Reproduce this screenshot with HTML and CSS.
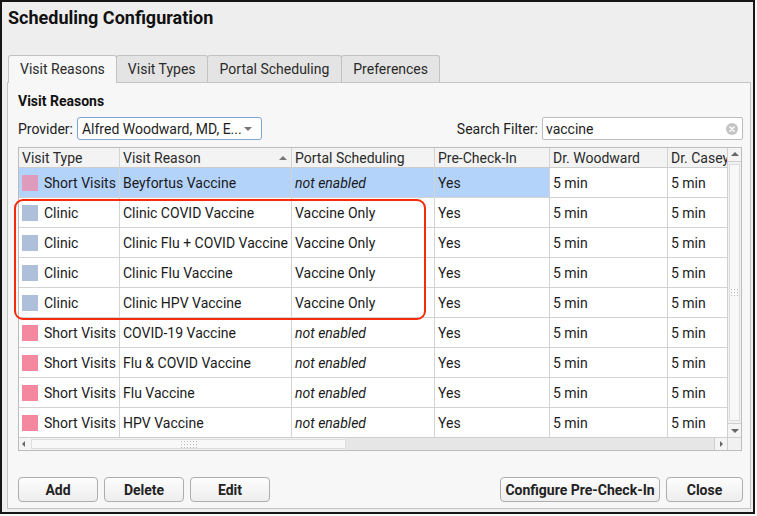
FILE: index.html
```html
<!DOCTYPE html>
<html lang="en">
<head>
    <meta charset="UTF-8">
    <title>Scheduling Configuration</title>
    <link rel="stylesheet" href="styles.css">
</head>
<body>

    <div class="window">
        <h1 class="title">Scheduling Configuration</h1>

        <div class="tabs">
            <div class="tab active">Visit Reasons</div>
            <div class="tab">Visit Types</div>
            <div class="tab wide">Portal Scheduling</div>
            <div class="tab">Preferences</div>
        </div>

        <div class="panel">
            <h2 class="section-title">Visit Reasons</h2>

            <div class="filters">
                <label class="field-label">Provider:</label>
                <div class="select">
                    <span>Alfred Woodward, MD, E...</span>
                    <span class="caret"></span>
                </div>
                <div class="spacer"></div>
                <label class="field-label">Search Filter:</label>
                <div class="search">
                    <span>vaccine</span>
                    <span class="clear">
                        <svg width="12" height="12" viewBox="0 0 12 12">
                            <circle cx="6" cy="6" r="6" fill="#c4c4c4"/>
                            <path d="M4 4 L8 8 M8 4 L4 8" stroke="#fff" stroke-width="1.6" stroke-linecap="round"/>
                        </svg>
                    </span>
                </div>
            </div>

            <div class="grid-frame">
                <div class="viewport">
                    <table>
                        <colgroup>
                            <col class="c-type">
                            <col class="c-reason">
                            <col class="c-portal">
                            <col class="c-precheck">
                            <col class="c-woodward">
                            <col class="c-casey">
                        </colgroup>
                        <thead>
                            <tr>
                                <th>Visit Type</th>
                                <th class="sorted">Visit Reason <span class="sort-arrow"></span></th>
                                <th>Portal Scheduling</th>
                                <th>Pre-Check-In</th>
                                <th>Dr. Woodward</th>
                                <th>Dr. Casey</th>
                            </tr>
                        </thead>
                        <tbody id="reasonRows">
                            <!-- rows are filled in by the script below -->
                        </tbody>
                    </table>
                </div>

                <div class="vscroll">
                    <div class="arrow-btn up"></div>
                    <div class="vthumb"><span class="grip"></span></div>
                    <div class="arrow-btn down"></div>
                </div>

                <div class="hscroll">
                    <div class="arrow-btn left"></div>
                    <div class="hthumb"><span class="grip"></span></div>
                    <div class="htrack"></div>
                    <div class="arrow-btn right"></div>
                </div>
                <div class="corner"></div>

                <div class="highlight"></div>
            </div>

            <div class="actions">
                <button class="btn btn-add">Add</button>
                <button class="btn btn-delete">Delete</button>
                <button class="btn btn-edit">Edit</button>
                <div class="spacer"></div>
                <button class="btn btn-config">Configure Pre-Check-In</button>
                <button class="btn btn-close">Close</button>
            </div>
        </div>
    </div>

    <script>
        const reasons = [
            { type: 'Short Visits', swatch: 'swatch-beyfortus', reason: 'Beyfortus Vaccine', portal: null, selected: true },
            { type: 'Clinic', swatch: 'swatch-clinic', reason: 'Clinic COVID Vaccine', portal: 'Vaccine Only' },
            { type: 'Clinic', swatch: 'swatch-clinic', reason: 'Clinic Flu + COVID Vaccine', portal: 'Vaccine Only' },
            { type: 'Clinic', swatch: 'swatch-clinic', reason: 'Clinic Flu Vaccine', portal: 'Vaccine Only' },
            { type: 'Clinic', swatch: 'swatch-clinic', reason: 'Clinic HPV Vaccine', portal: 'Vaccine Only' },
            { type: 'Short Visits', swatch: 'swatch-short', reason: 'COVID-19 Vaccine', portal: null },
            { type: 'Short Visits', swatch: 'swatch-short', reason: 'Flu & COVID Vaccine', portal: null },
            { type: 'Short Visits', swatch: 'swatch-short', reason: 'Flu Vaccine', portal: null },
            { type: 'Short Visits', swatch: 'swatch-short', reason: 'HPV Vaccine', portal: null }
        ];

        const tableBody = document.getElementById('reasonRows');

        reasons.forEach(item => {
            const row = document.createElement('tr');
            if (item.selected) row.classList.add('selected');

            const typeCell = document.createElement('td');
            typeCell.className = 'type-cell';
            const swatch = document.createElement('span');
            swatch.className = 'swatch ' + item.swatch;
            typeCell.appendChild(swatch);
            typeCell.appendChild(document.createTextNode(item.type));
            row.appendChild(typeCell);

            const reasonCell = document.createElement('td');
            reasonCell.textContent = item.reason;
            row.appendChild(reasonCell);

            const portalCell = document.createElement('td');
            if (item.portal) {
                portalCell.textContent = item.portal;
            } else {
                portalCell.textContent = 'not enabled';
                portalCell.classList.add('muted');
            }
            row.appendChild(portalCell);

            ['Yes', '5 min', '5 min'].forEach((text, i) => {
                const cell = document.createElement('td');
                cell.textContent = text;
                if (i > 0) cell.classList.add('plain');
                row.appendChild(cell);
            });

            tableBody.appendChild(row);
        });
    </script>

</body>
</html>
```

FILE: styles.css
```css
body {
    margin: 0;
    background: #fafafa;
    font-family: Roboto, 'Liberation Sans', sans-serif;
    font-size: 14px;
    color: #1e1e1e;
}

.window {
    width: 755px;
    height: 514px;
    box-sizing: border-box;
    border: 2px solid #161616;
    background: #eeeeee;
    padding: 0 2px 0 5px;
    display: flex;
    flex-direction: column;
}

.title {
    margin: 0;
    padding: 4px 0 0 1px;
    font-size: 18px;
    line-height: 24px;
    font-weight: bold;
    color: #111;
}

/* tab strip */
.tabs {
    display: flex;
    margin-top: 25px;
    padding-left: 1px;
    height: 27px;
    position: relative;
    z-index: 1;
}

.tab {
    box-sizing: border-box;
    height: 27px;
    line-height: 26px;
    padding: 0 11px;
    margin-right: -1px;
    border: 1px solid #c2c2c2;
    border-bottom: none;
    border-radius: 3px 3px 0 0;
    background: #e4e4e4;
    color: #2a2a2a;
}

.tab.wide {
    padding: 0 12px;
}

.tab.active {
    background: #f7f7f7;
    height: 28px;
}

.panel {
    flex: 1;
    margin-bottom: 3px;
    border: 1px solid #c4c4c4;
    background: #f7f7f7;
    padding: 9px 8px 0 10px;
    display: flex;
    flex-direction: column;
}

.section-title {
    margin: 0;
    font-size: 14px;
    line-height: 18px;
    font-weight: bold;
    color: #111;
}

/* provider + search row */
.filters {
    display: flex;
    align-items: center;
    height: 23px;
    margin-top: 7px;
}

.field-label {
    margin-right: 4px;
    color: #222;
}

.spacer {
    flex: 1;
}

.select {
    box-sizing: border-box;
    width: 185px;
    height: 23px;
    border: 1px solid #7ea6d6;
    border-radius: 3px;
    background: #fff;
    display: flex;
    align-items: center;
    padding: 0 0 0 4px;
}

.select .caret {
    margin-left: auto;
    margin-right: 9px;
    width: 0;
    height: 0;
    border-left: 4px solid transparent;
    border-right: 4px solid transparent;
    border-top: 4px solid #777;
}

.search {
    box-sizing: border-box;
    width: 201px;
    height: 23px;
    margin-right: -1px;
    border: 1px solid #bdbdbd;
    border-radius: 2px;
    background: #fff;
    display: flex;
    align-items: center;
    padding: 0 4px 0 3px;
}

.search .clear {
    margin-left: auto;
    display: flex;
}

/* table with its scroll bars */
.grid-frame {
    position: relative;
    margin-top: 7px;
    box-sizing: border-box;
    width: 724px;
    height: 304px;
    border: 1px solid #bdbdbd;
    background: #fff;
    display: grid;
    grid-template-columns: 708px 14px;
    grid-template-rows: 289px 13px;
}

.viewport {
    overflow: hidden;
}

table {
    table-layout: fixed;
    border-collapse: separate;
    border-spacing: 0;
    width: 766px;
}

.c-type { width: 101px; }
.c-reason { width: 172px; }
.c-portal { width: 143px; }
.c-precheck { width: 115px; }
.c-woodward { width: 118px; }
.c-casey { width: 117px; }

th, td {
    text-align: left;
    white-space: nowrap;
    overflow: hidden;
    border-right: 1px solid #d3d3d3;
    border-bottom: 1px solid #d3d3d3;
    padding: 0 0 0 3px;
    line-height: 16px;
}

th {
    height: 19px;
    font-weight: normal;
    color: #2a2a2a;
    background: #f3f3f3;
    border-bottom-color: #cccccc;
}

th.sorted {
    position: relative;
}

.sort-arrow {
    position: absolute;
    right: 4px;
    top: 8px;
    width: 0;
    height: 0;
    border-left: 4px solid transparent;
    border-right: 4px solid transparent;
    border-bottom: 4px solid #777;
}

td {
    height: 29px;
    color: #1a1a1a;
}

td.muted {
    font-style: italic;
}

tr.selected td {
    background: #b4d3fb;
}

tr.selected td.plain {
    background: #fff;
}

.type-cell {
    padding-left: 3px;
}

.swatch {
    display: inline-block;
    width: 16px;
    height: 16px;
    margin-right: 6px;
    vertical-align: -3px;
}

.swatch-beyfortus { background: #df9bbb; }
.swatch-clinic { background: #aebfd9; }
.swatch-short { background: #f4889f; }

/* scroll bars */
.vscroll {
    border-left: 1px solid #cfcfcf;
    background: #f1f1f1;
    display: flex;
    flex-direction: column;
}

.arrow-btn {
    position: relative;
    flex: none;
    background: #f4f4f4;
}

.vscroll .arrow-btn {
    height: 13px;
}

.arrow-btn.up { border-bottom: 1px solid #cfcfcf; }
.arrow-btn.down { border-top: 1px solid #cfcfcf; }

.arrow-btn::after {
    content: '';
    position: absolute;
    width: 0;
    height: 0;
}

.arrow-btn.up::after {
    left: 3px;
    top: 4px;
    border-left: 4px solid transparent;
    border-right: 4px solid transparent;
    border-bottom: 4px solid #666;
}

.arrow-btn.down::after {
    left: 3px;
    top: 5px;
    border-left: 4px solid transparent;
    border-right: 4px solid transparent;
    border-top: 4px solid #666;
}

.vthumb {
    flex: 1;
    margin: 2px 1px;
    border: 1px solid #dddddd;
    background: #f8f8f8;
    display: flex;
    align-items: center;
    justify-content: center;
}

.grip {
    width: 9px;
    height: 9px;
    background-image: radial-gradient(circle, #b9b9b9 0.7px, transparent 1px);
    background-size: 3px 3px;
}

.hscroll {
    border-top: 1px solid #cfcfcf;
    background: #f1f1f1;
    display: flex;
}

.hscroll .arrow-btn {
    width: 12px;
}

.arrow-btn.left::after {
    left: 3px;
    top: 3px;
    border-top: 3px solid transparent;
    border-bottom: 3px solid transparent;
    border-right: 3px solid #666;
}

.arrow-btn.right {
    border-left: 1px solid #cfcfcf;
}

.arrow-btn.right::after {
    left: 5px;
    top: 3px;
    border-top: 3px solid transparent;
    border-bottom: 3px solid transparent;
    border-left: 3px solid #666;
}

.hthumb {
    width: 313px;
    margin: 1px 0;
    border: 1px solid #dddddd;
    background: #f8f8f8;
    display: flex;
    align-items: center;
    justify-content: center;
}

.hthumb .grip {
    width: 18px;
    height: 9px;
}

.htrack {
    flex: 1;
    background: #e6e6e6;
}

.corner {
    border-left: 1px solid #cfcfcf;
    border-top: 1px solid #cfcfcf;
    background: #f1f1f1;
}

/* red outline drawn over the clinic rows */
.highlight {
    position: absolute;
    left: -5px;
    top: 51px;
    width: 412px;
    height: 121px;
    box-sizing: border-box;
    border: 2.5px solid #f42b0c;
    border-radius: 9px;
    pointer-events: none;
}

/* bottom buttons */
.actions {
    display: flex;
    margin-top: 26px;
    gap: 6px;
}

.btn {
    height: 25px;
    box-sizing: border-box;
    border: 1px solid #aeaeae;
    border-radius: 4px;
    background: linear-gradient(#fdfdfd, #ededed);
    font-family: Roboto, 'Liberation Sans', sans-serif;
    font-size: 14px;
    font-weight: bold;
    color: #222;
    padding: 0;
}

.btn-add,
.btn-delete,
.btn-edit {
    width: 80px;
}

.btn-config {
    width: 160px;
}

.btn-close {
    width: 77px;
    margin-right: -1px;
}
```
